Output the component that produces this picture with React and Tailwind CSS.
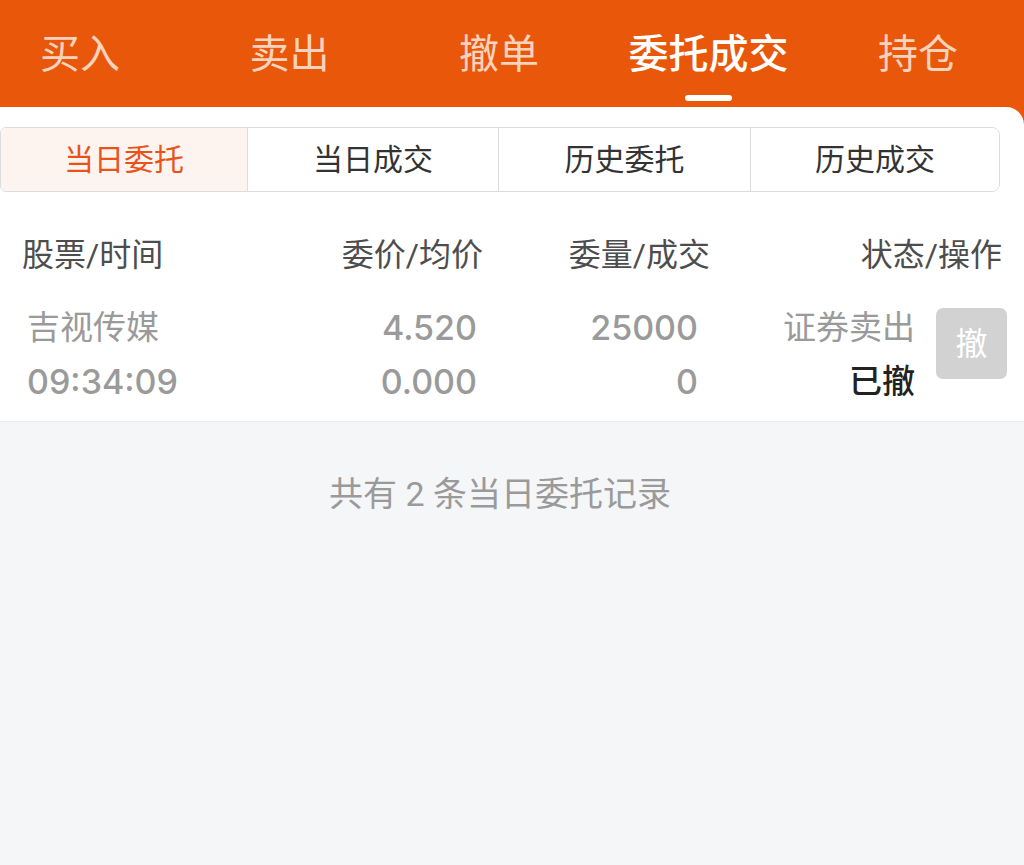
import { useState } from 'react'

const tabs = ['买入', '卖出', '撤单', '委托成交', '持仓']
const segs = [
  { label: '当日委托', w: 'w-[246px]' },
  { label: '当日成交', w: 'w-[251px]' },
  { label: '历史委托', w: 'w-[252px]' },
  { label: '历史成交', w: 'flex-1' },
]

const num = "font-['Inter',sans-serif] text-[34px] leading-[54px] font-medium text-[#9a9a9a]"

export default function App() {
  const [tab, setTab] = useState(3)
  const [seg, setSeg] = useState(0)

  return (
    <div className="min-h-[865px] bg-[#f5f6f8] font-['Roboto','Noto_Sans_CJK_SC',sans-serif]">
      <div className="bg-[#e9570b]">
        {/* top tabs */}
        <div className="flex h-[107px] gap-[49.5px]">
          {tabs.map((t, i) => (
            <button
              key={t}
              onClick={() => setTab(i)}
              className="flex w-[160px] shrink-0 flex-col items-center pt-[31px]"
            >
              <span
                className={
                  i === tab
                    ? 'text-[40px] leading-[48px] font-medium text-white'
                    : 'text-[40px] leading-[48px] text-[#f9d3bd]'
                }
              >
                {t}
              </span>
              {i === tab && <span className="mt-[16px] h-[6px] w-[47px] rounded-full bg-white" />}
            </button>
          ))}
        </div>

        <div className="rounded-tr-[18px] bg-white">
          {/* segmented control */}
          <div className="mr-[24px] flex h-[65px] translate-y-[20px] overflow-hidden rounded-l-[6px] rounded-r-[8px] border border-[#dcdcdc]">
            {segs.map((s, i) => (
              <button
                key={s.label}
                onClick={() => setSeg(i)}
                className={
                  s.w + ' text-[30px] ' +
                  (i > 0 ? 'border-l border-[#dcdcdc] ' : '') +
                  (i === seg ? 'bg-[#fef4ef] text-[#e8531c]' : 'bg-white text-[#333333]')
                }
              >
                {s.label}
              </button>
            ))}
          </div>

          {/* column header */}
          <div className="mt-[64px] flex pl-[22px] pr-[22px] text-[32px] leading-[38px] text-[#4d4d4d]">
            <div className="w-[258px]">股票/时间</div>
            <div className="w-[203px] text-right">委价/均价</div>
            <div className="w-[227px] text-right">委量/成交</div>
            <div className="flex-1 text-right">状态/操作</div>
          </div>

          {/* row */}
          <div className="mt-[27px] flex border-b border-[#ececec] pb-[12px] pl-[27px] pr-[17px]">
            <div className="w-[253px] text-[#9a9a9a]">
              <div className="text-[33px] leading-[54px]">吉视传媒</div>
              <div className={num}>09:34:09</div>
            </div>
            <div className="w-[197px] text-right">
              <div className={num}>4.520</div>
              <div className={num}>0.000</div>
            </div>
            <div className="w-[221px] text-right">
              <div className={num}>25000</div>
              <div className={num}>0</div>
            </div>
            <div className="flex-1 text-right">
              <div className="text-[33px] leading-[54px] text-[#9a9a9a]">证券卖出</div>
              <div className="text-[33px] leading-[54px] font-medium text-[#222222]">已撤</div>
            </div>
            <button className="ml-[21px] mt-[7px] flex h-[71px] w-[71px] items-center justify-center rounded-[7px] bg-[#d2d2d2] text-[32px] text-white">
              撤
            </button>
          </div>
        </div>
      </div>

      <div className="pr-[24px] pt-[52px] text-center text-[34px] leading-[40px] text-[#9a9a9a]">
        共有 2 条当日委托记录
      </div>
    </div>
  )
}
